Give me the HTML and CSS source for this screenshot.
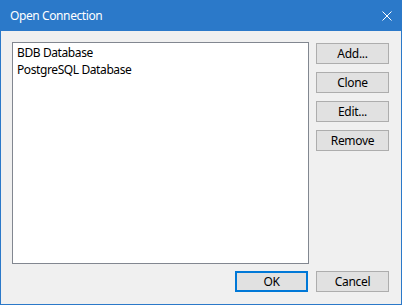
FILE: index.html
```html
<!DOCTYPE html>
<html>
<head>
<meta charset="utf-8">
<link rel="stylesheet" href="styles.css">
</head>
<body>
<div class="window">
  <div class="titlebar">
    <span class="title">Open Connection</span>
    <span class="close">
      <svg width="10" height="10" viewBox="0 0 10 10"><path d="M0.5 0.5 L9.5 9.5 M9.5 0.5 L0.5 9.5" stroke="#fff" stroke-width="1" fill="none"/></svg>
    </span>
  </div>
  <div class="content">
    <div class="top">
      <div class="listbox">
        <div class="item">BDB Database</div>
        <div class="item">PostgreSQL Database</div>
      </div>
      <div class="side">
        <button class="btn">Add...</button>
        <button class="btn">Clone</button>
        <button class="btn">Edit...</button>
        <button class="btn">Remove</button>
      </div>
    </div>
    <div class="bottom">
      <button class="btn default">OK</button>
      <button class="btn">Cancel</button>
    </div>
  </div>
</div>
</body>
</html>
```

FILE: styles.css
```css
html, body {
  margin: 0;
  padding: 0;
  background: #f0f0f0;
}
.window {
  width: 402px;
  height: 305px;
  box-sizing: border-box;
  border: 1px solid #2b79c9;
  border-top: none;
  background: #f0f0f0;
  font-family: "Noto Sans", "Open Sans", sans-serif;
  font-size: 12px;
  letter-spacing: -0.4px;
  color: #000;
  display: flex;
  flex-direction: column;
}
.titlebar {
  height: 31px;
  background: #2b79c9;
  display: flex;
  align-items: center;
  justify-content: space-between;
  padding: 0 9px 0 9px;
  box-sizing: border-box;
  flex: none;
}
.title {
  color: #fff;
  font-size: 12px;
  line-height: 16px;
}
.close {
  display: flex;
  width: 10px;
  height: 10px;
}
.content {
  flex: 1;
  display: flex;
  flex-direction: column;
  padding: 11px 12px 12px 11px;
  gap: 7px;
}
.top {
  display: flex;
  gap: 7px;
  height: 222px;
}
.listbox {
  width: 297px;
  height: 222px;
  box-sizing: border-box;
  border: 1px solid #828790;
  background: #fff;
  padding: 1px 0 0 4px;
}
.item {
  height: 17px;
  line-height: 17px;
  white-space: nowrap;
}
.side {
  display: flex;
  flex-direction: column;
  gap: 8px;
  padding-top: 1px;
}
.btn {
  width: 73px;
  height: 21px;
  box-sizing: border-box;
  border: 1px solid #adadad;
  background: #e1e1e1;
  font-family: "Noto Sans", "Open Sans", sans-serif;
  font-size: 12px;
  letter-spacing: -0.3px;
  color: #000;
  padding: 0;
  margin: 0;
  line-height: 18px;
}
.btn.default {
  border: 2px solid #0078d7;
}
.bottom {
  display: flex;
  justify-content: flex-end;
  gap: 8px;
  height: 21px;
}
```
